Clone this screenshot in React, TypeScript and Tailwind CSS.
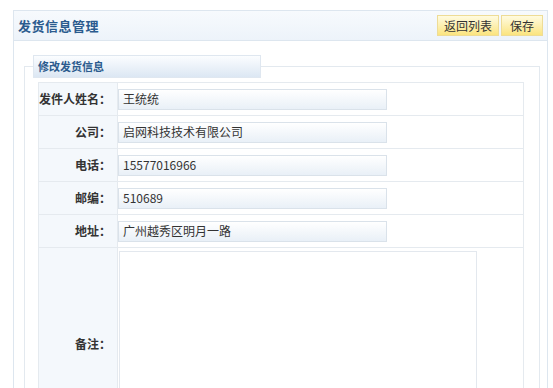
import React from "react";

const font = { fontFamily: '"Noto Sans CJK SC", "Liberation Sans", sans-serif' };

const rows = [
  { label: "发件人姓名：", value: "王统统" },
  { label: "公司：", value: "启网科技技术有限公司" },
  { label: "电话：", value: "15577016966" },
  { label: "邮编：", value: "510689" },
  { label: "地址：", value: "广州越秀区明月一路" },
];

function YellowButton({ children, className }: { children: React.ReactNode; className: string }) {
  return (
    <button
      className={
        "h-[21px] border border-[#eedc96] bg-gradient-to-b from-[#fffbe0] to-[#fbe47e] text-[12px] leading-[19px] text-[#333] " +
        className
      }
    >
      {children}
    </button>
  );
}

export default function App() {
  return (
    <div style={font} className="w-[553px] h-[388px] overflow-hidden bg-white">
      <div className="ml-[13px] mt-[10px] w-[535px] h-[400px] border border-[#dde6ef]">
        <div className="h-[30px] flex items-center justify-between pl-[4px] pr-[4px] bg-gradient-to-b from-[#f7fafd] to-[#edf3fa] border-b border-[#dde6ef]">
          <span className="text-[13px] font-bold text-[#2b5b8e] tracking-[0.5px]">发货信息管理</span>
          <div className="flex gap-[2px]">
            <YellowButton className="w-[62px]">返回列表</YellowButton>
            <YellowButton className="w-[42px]">保存</YellowButton>
          </div>
        </div>

        <div className="pl-[10px] pt-[14px]">
          <fieldset className="w-[514px] border border-[#e3e9ef] pl-[13px] pr-[15px] pb-4">
            <legend className="-ml-[5px] w-[228px] h-[23px] flex items-center pl-[4px] border border-[#dfe7f0] bg-gradient-to-b from-[#fbfdff] to-[#dce7f3] text-[11px] font-bold text-[#2b5b8e]">
              修改发货信息
            </legend>
            <table className="mt-[4px] w-[486px] border-collapse border border-[#e5eaef] text-[12px]">
              <tbody>
                {rows.map((r) => (
                  <tr key={r.label} className="h-[33px]">
                    <td className="w-[79px] border border-[#e5eaef] bg-[#f4f8fc] text-right pr-[6px] font-bold text-[#333]">
                      {r.label}
                    </td>
                    <td className="border border-[#e5eaef] pl-0">
                      <div className="w-[269px] h-[21px] border border-[#dae2ea] bg-gradient-to-b from-[#ffffff] to-[#e9f0f7] pl-[4px] text-[12px] leading-[18px] text-[#333]">
                        {r.value}
                      </div>
                    </td>
                  </tr>
                ))}
                <tr className="h-[192px]">
                  <td className="w-[79px] border border-[#e5eaef] bg-[#f4f8fc] text-right pr-[6px] font-bold text-[#333]">
                    备注：
                  </td>
                  <td className="border border-[#e5eaef] pl-[1px] pt-[3px] align-top">
                    <div className="w-[358px] h-[184px] border border-[#e3e8ee] bg-white" />
                  </td>
                </tr>
              </tbody>
            </table>
          </fieldset>
        </div>
      </div>
    </div>
  );
}
